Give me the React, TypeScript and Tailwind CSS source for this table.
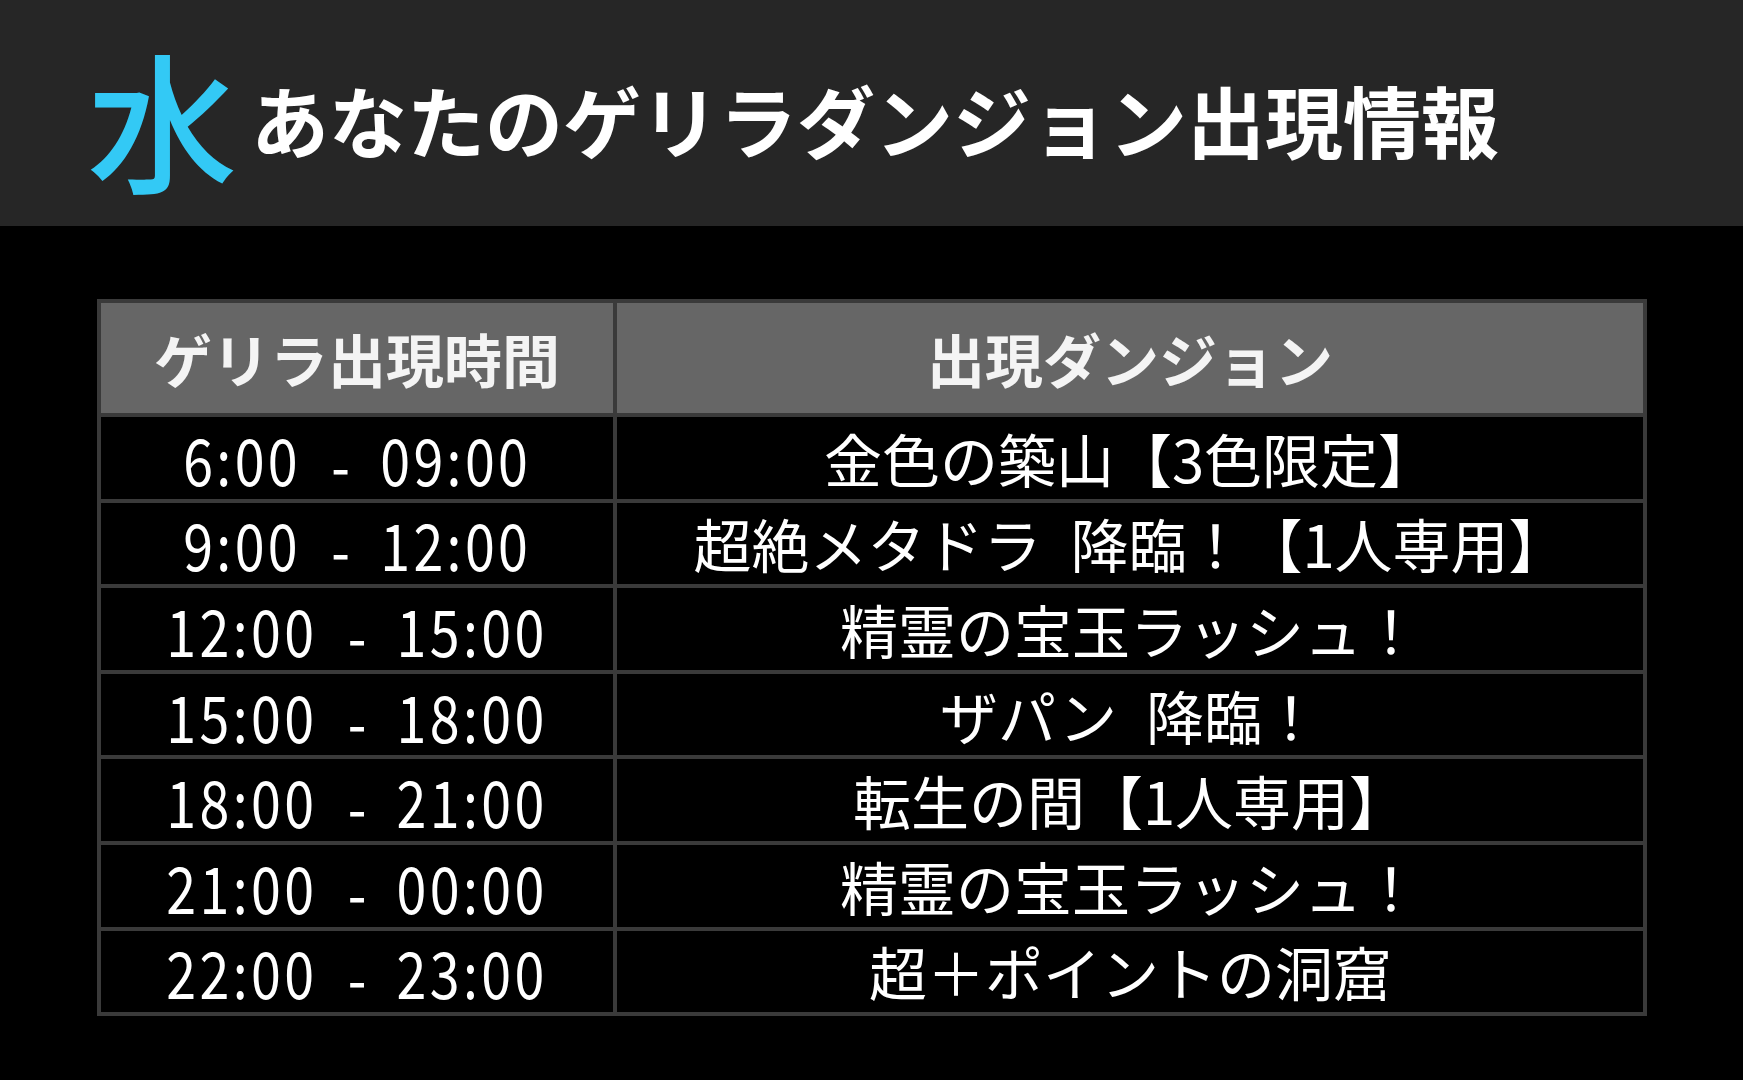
const rows = [
  { time: "6:00", end: "09:00", name: "金色の築山【3色限定】" },
  { time: "9:00", end: "12:00", name: "超絶メタドラ\u2002降臨！【1人専用】" },
  { time: "12:00", end: "15:00", name: "精霊の宝玉ラッシュ！" },
  { time: "15:00", end: "18:00", name: "ザパン\u2002降臨！" },
  { time: "18:00", end: "21:00", name: "転生の間【1人専用】" },
  { time: "21:00", end: "00:00", name: "精霊の宝玉ラッシュ！" },
  { time: "22:00", end: "23:00", name: "超＋ポイントの洞窟" },
];

const jp = { fontFamily: '"Noto Sans CJK JP", "Noto Sans", sans-serif' };

export default function App() {
  return (
    <div className="w-[1743px] h-[1080px] bg-black overflow-hidden" style={jp}>
      {/* Title band */}
      <div className="h-[226px] bg-[#262626] flex items-center pl-[87px] pt-[12px]">
        <span className="text-[150px] leading-none font-medium text-[#33c9f5] -translate-y-[2px]">水</span>
        <h1 className="ml-[14px] text-[78px] leading-none font-bold text-white">
          あなたのゲリラダンジョン出現情報
        </h1>
      </div>

      {/* Schedule table */}
      <div className="mt-[73px] ml-[97px] w-[1550px] grid grid-cols-[512px_1fr] gap-[4px] p-[4px] bg-[#3a3a3a]">
        <div className="h-[110px] bg-[#666666] flex items-center justify-center text-[58px] font-bold text-[#f4f4f4]">
          ゲリラ出現時間
        </div>
        <div className="h-[110px] bg-[#666666] flex items-center justify-center text-[58px] font-bold text-[#f4f4f4]">
          出現ダンジョン
        </div>
        {rows.map((r, i) => (
          <div key={i} className="contents">
            <div className="h-[81.6px] bg-black flex items-center justify-center text-[64px] leading-none text-white">
              <span className="inline-flex items-center scale-x-[0.84]">
                <span className="tracking-[4px]">{r.time}</span>
                <span className="mx-[36px] translate-y-[4px]">-</span>
                <span className="tracking-[4px]">{r.end}</span>
              </span>
            </div>
            <div className="h-[81.6px] bg-black flex items-center justify-center text-[58px] leading-none text-white">
              {r.name}
            </div>
          </div>
        ))}
      </div>
    </div>
  );
}
